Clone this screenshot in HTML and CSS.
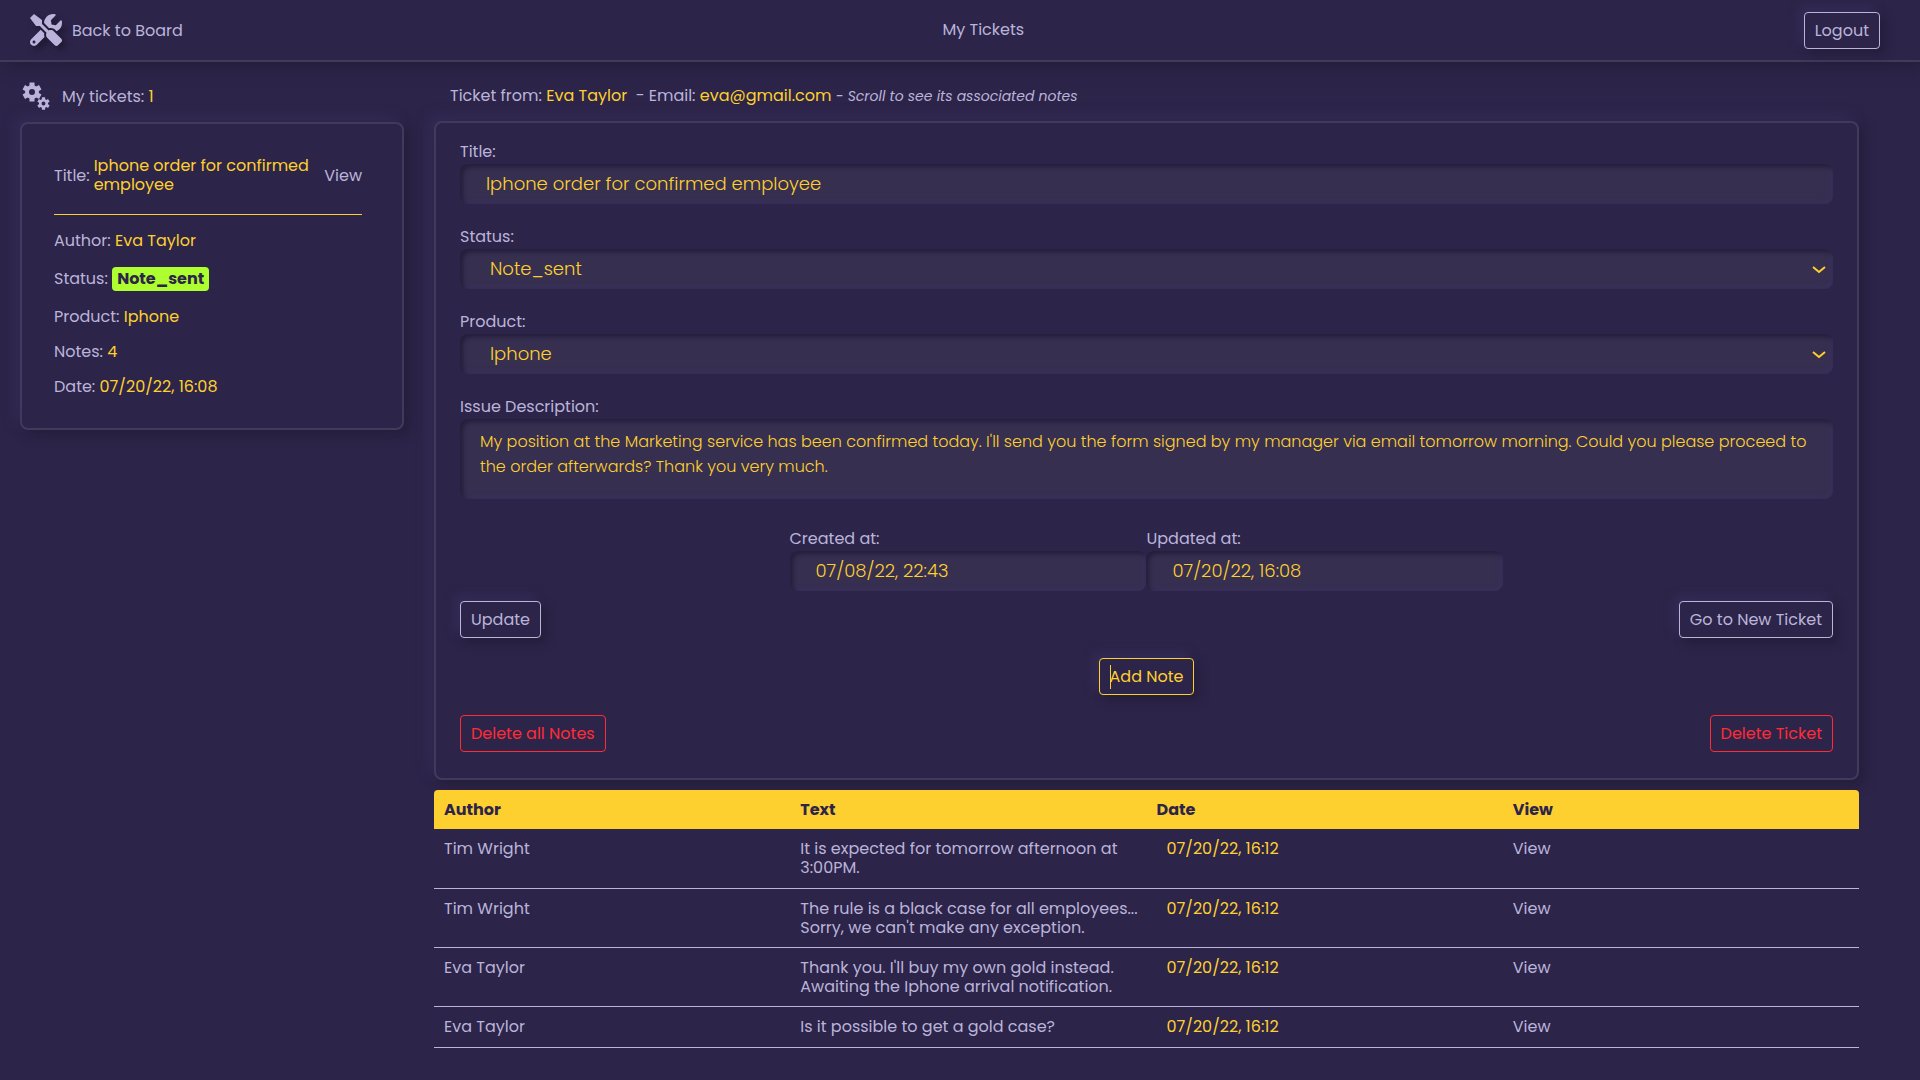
FILE: index.html
```html
<!DOCTYPE html>
<html lang="en">
<head>
<meta charset="utf-8">
<meta name="viewport" content="width=device-width, initial-scale=1">
<title>My Tickets</title>
<link rel="stylesheet" href="styles.css">
</head>
<body>
<header class="topbar">
  <a class="back-link" href="#">
    <svg class="tools-icon" viewBox="0 0 512 512" aria-hidden="true"><path d="M501.1 395.7L384 278.6c-23.1-23.1-57.6-27.6-85.4-13.9L192 158.1V96L64 0 0 64l96 128h62.1l106.6 106.6c-13.6 27.8-9.2 62.3 13.9 85.4l117.1 117.1c14.6 14.6 38.2 14.6 52.7 0l52.7-52.7c14.5-14.6 14.5-38.2 0-52.7zM331.7 225c28.3 0 54.9 11 74.9 31l19.4 19.4c15.8-6.9 30.8-16.5 43.8-29.5 37.1-37.1 49.7-89.3 37.9-136.7-2.2-9-13.5-12.1-20.1-5.5l-74.4 74.4-67.9-11.3L334 98.9l74.4-74.4c6.6-6.6 3.4-17.9-5.7-20.2-47.4-11.7-99.6.9-136.6 37.9-28.5 28.5-41.9 66.1-41.2 103.6l82.1 82.1c8.1-1.9 16.5-2.9 24.7-2.9zm-103.9 82l-56.7-56.7L18.7 402.8c-25 25-25 65.5 0 90.5s65.5 25 90.5 0l123.6-123.6c-7.6-19.9-9.9-41.6-5-62.7zM64 472c-13.2 0-24-10.8-24-24 0-13.3 10.7-24 24-24s24 10.7 24 24c0 13.2-10.7 24-24 24z"/></svg>
    Back to Board
  </a>
  <h1 class="page-title">My Tickets</h1>
  <button class="btn" type="button">Logout</button>
</header>

<div class="layout">
  <aside class="sidebar">
    <h2 class="list-heading">
      <svg class="gears-icon" viewBox="0 0 28 28" aria-hidden="true">
        <defs>
          <g id="gear">
            <circle r="5" fill="none" stroke="currentColor" stroke-width="4"/>
            <g stroke="currentColor" stroke-width="5">
              <path d="M0-9.500V-5M0 9.500V5"/>
              <path d="M0-9.500V-5M0 9.500V5" transform="rotate(60)"/>
              <path d="M0-9.500V-5M0 9.500V5" transform="rotate(120)"/>
            </g>
          </g>
        </defs>
        <use href="#gear" transform="translate(10 10)"/>
        <use href="#gear" transform="translate(21.500 21.500) scale(.65)"/>
      </svg>
      <span>My tickets: <span class="value">1</span></span>
    </h2>
    <article class="card ticket">
      <div class="ticket-head">
        <span>Title:</span>
        <span class="value ticket-title">Iphone order for confirmed employee</span>
        <a href="#">View</a>
      </div>
      <ul class="ticket-facts">
        <li>Author: <span class="value">Eva Taylor</span></li>
        <li>Status: <span class="badge">Note_sent</span></li>
        <li>Product: <span class="value">Iphone</span></li>
        <li>Notes: <span class="value">4</span></li>
        <li>Date: <span class="value">07/20/22, 16:08</span></li>
      </ul>
    </article>
  </aside>

  <main class="detail">
    <p class="detail-heading">Ticket from: <span class="value">Eva Taylor</span>&nbsp; - Email: <span class="value">eva@gmail.com</span> <em>- Scroll to see its associated notes</em></p>
    <form class="card ticket-form">
      <div class="field">
        <label for="title">Title:</label>
        <input class="control" id="title" type="text" value="Iphone order for confirmed employee">
      </div>
      <div class="field">
        <label for="status">Status:</label>
        <div class="select-wrap">
          <select class="control" id="status"><option>Note_sent</option></select>
          <svg class="chevron" viewBox="0 0 14 8" aria-hidden="true"><path d="M1 1l6 5 6-5"/></svg>
        </div>
      </div>
      <div class="field">
        <label for="product">Product:</label>
        <div class="select-wrap">
          <select class="control" id="product"><option>Iphone</option></select>
          <svg class="chevron" viewBox="0 0 14 8" aria-hidden="true"><path d="M1 1l6 5 6-5"/></svg>
        </div>
      </div>
      <div class="field">
        <label for="description">Issue Description:</label>
        <textarea class="control" id="description">My position at the Marketing service has been confirmed today. I'll send you the form signed by my manager via email tomorrow morning. Could you please proceed to the order afterwards? Thank you very much.</textarea>
      </div>
      <div class="dates">
        <div class="field">
          <label for="created">Created at:</label>
          <input class="control" id="created" type="text" value="07/08/22, 22:43" readonly>
        </div>
        <div class="field">
          <label for="updated">Updated at:</label>
          <input class="control" id="updated" type="text" value="07/20/22, 16:08" readonly>
        </div>
      </div>
      <div class="actions">
        <div class="action-row">
          <button class="btn" type="button">Update</button>
          <button class="btn" type="button">Go to New Ticket</button>
        </div>
        <div class="action-row centered">
          <button class="btn btn-note" type="button">Add Note</button>
        </div>
        <div class="action-row">
          <button class="btn btn-danger" type="button">Delete all Notes</button>
          <button class="btn btn-danger" type="button">Delete Ticket</button>
        </div>
      </div>
    </form>

    <table class="notes">
      <thead>
        <tr><th>Author</th><th>Text</th><th>Date</th><th>View</th></tr>
      </thead>
      <tbody>
        <tr><td>Tim Wright</td><td>It is expected for tomorrow afternoon at 3:00PM.</td><td class="note-date">07/20/22, 16:12</td><td><a href="#">View</a></td></tr>
        <tr><td>Tim Wright</td><td>The rule is a black case for all employees... Sorry, we can't make any exception.</td><td class="note-date">07/20/22, 16:12</td><td><a href="#">View</a></td></tr>
        <tr><td>Eva Taylor</td><td>Thank you. I'll buy my own gold instead. Awaiting the Iphone arrival notification.</td><td class="note-date">07/20/22, 16:12</td><td><a href="#">View</a></td></tr>
        <tr><td>Eva Taylor</td><td>Is it possible to get a gold case?</td><td class="note-date">07/20/22, 16:12</td><td><a href="#">View</a></td></tr>
      </tbody>
    </table>
  </main>
</div>
</body>
</html>
```
FILE: styles.css
```css
:root {
  --bg: #2d2449;
  --text: #bab4da;
  --yellow: #fed02f;
  --line: #42395d;
  --field: #362f50;
  --dark: #241e3a;
  --light: #342d57;
  --red: #ff2c36;
}

* { box-sizing: border-box; }

body {
  margin: 0;
  min-height: 100vh;
  background: var(--bg);
  color: var(--text);
  font: 16px/1.2 Poppins, Inter, sans-serif;
}

a { color: inherit; text-decoration: none; }
h1, h2, p, ul { margin: 0; padding: 0; font-size: 16px; font-weight: 400; }
.value { color: var(--yellow); }

.topbar {
  display: flex;
  align-items: center;
  justify-content: space-between;
  height: 62px;
  padding: 0 40px 0 30px;
  border-bottom: 2px solid var(--line);
  box-shadow: 5px 5px 15px var(--dark);
}
.back-link { display: flex; align-items: center; gap: 10px; line-height: 19px; }
.tools-icon {
  width: 32px;
  height: 32px;
  fill: currentColor;
  filter: drop-shadow(4px 4px 3px #1d182f);
}
.page-title { margin-left: -20px; }

.btn {
  height: 37px;
  padding: 0 10px;
  border: 1px solid currentColor;
  border-radius: 4px;
  background: var(--bg);
  color: var(--text);
  font: inherit;
  line-height: 19px;
  box-shadow: 5px 5px 10px var(--dark), -5px -5px 10px var(--light);
}

.layout {
  display: grid;
  grid-template-columns: 20vw 1fr;
  gap: 30px;
  padding: 16px 61px 32px 20px;
}

.card {
  background: var(--bg);
  border: 2px solid var(--line);
  border-radius: 8px;
  box-shadow: 5px 5px 12px var(--dark), -5px -5px 12px var(--light);
}

.list-heading {
  display: flex;
  align-items: center;
  gap: 12px;
  height: 36px;
  margin-bottom: 8px;
  padding-left: 2px;
  line-height: 19px;
}
.gears-icon { width: 28px; height: 28px; }

.ticket { padding: 32px 40px 32px 32px; }
.ticket-head {
  display: flex;
  align-items: center;
  gap: 4px;
  padding-bottom: 20px;
  border-bottom: 1px solid var(--yellow);
}
.ticket-title { flex: 1; }
.ticket-facts {
  display: grid;
  gap: 16px;
  padding-top: 16px;
  list-style: none;
}
.badge {
  display: inline-block;
  padding: 2px 5px 3px;
  border-radius: 4px;
  background: #adff2f;
  color: var(--bg);
  font-weight: 700;
}

.detail-heading { height: 43px; padding: 8px 16px; }
.detail-heading em { font-size: 14px; }

.ticket-form { padding: 17px 24px 26px; }
.field { display: flex; flex-direction: column; margin-bottom: 21px; }
.field label { line-height: 24px; }
.control {
  display: block;
  width: 100%;
  height: 40px;
  margin: 0;
  padding: 0 26px 2px;
  border: 0;
  border-radius: 8px;
  outline: 0;
  appearance: none;
  background: var(--field);
  color: var(--yellow);
  font: 300 18px/24px Poppins, Inter, sans-serif;
  box-shadow: inset 3px 3px 4px var(--dark), inset -3px -3px 4px #383059;
}
select.control { padding: 0 30px; }
textarea.control {
  height: 80px;
  padding: 10px 20px;
  resize: none;
  overflow: hidden;
  font-size: 16px;
  line-height: 25px;
}
.select-wrap { position: relative; }
.chevron {
  position: absolute;
  top: 17px;
  right: 7px;
  width: 14px;
  height: 8px;
  fill: none;
  stroke: var(--yellow);
  stroke-width: 2;
  pointer-events: none;
}

.dates {
  display: grid;
  grid-template-columns: 1fr 1fr;
  width: 52%;
  margin: 28px auto 10px;
}
.dates .field { margin: 0; }

.actions { display: grid; gap: 20px; }
.action-row { display: flex; justify-content: space-between; }
.centered { justify-content: center; }
.btn-note { position: relative; color: var(--yellow); }
.btn-note::before {
  content: "";
  position: absolute;
  top: 6px;
  left: 10px;
  width: 1px;
  height: 24px;
  background: currentColor;
}
.btn-danger { color: var(--red); box-shadow: none; }

.notes {
  width: 100%;
  margin-top: 10px;
  border-collapse: separate;
  border-spacing: 0;
  table-layout: fixed;
}
.notes th, .notes td { padding: 10px 4px 10px 10px; text-align: left; vertical-align: top; }
.notes th { background: var(--yellow); color: var(--bg); font-weight: 700; }
.notes th:first-child { border-top-left-radius: 4px; }
.notes th:last-child { border-top-right-radius: 4px; }
.notes td { border-bottom: 1px solid var(--text); }
.notes .note-date { padding-left: 20px; color: var(--yellow); }
```
